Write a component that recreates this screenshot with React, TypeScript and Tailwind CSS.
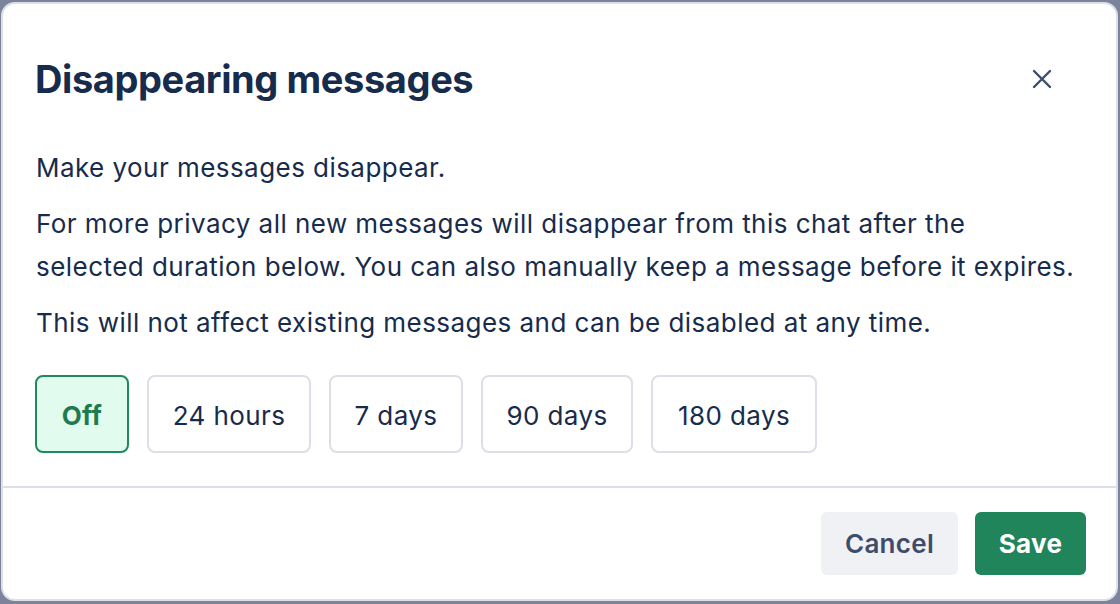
import React, { useState } from "react";

const options = [
  { label: "Off", w: "w-[94px]" },
  { label: "24 hours", w: "w-[164px]" },
  { label: "7 days", w: "w-[134px]" },
  { label: "90 days", w: "w-[152px]" },
  { label: "180 days", w: "w-[166px]" },
];

export default function App() {
  const [picked, setPicked] = useState("Off");

  return (
    <div className="h-[604px] w-full overflow-hidden bg-[#7b849a] pt-[2px] pl-[1px]" style={{ fontFamily: "Inter, 'Noto Sans', sans-serif" }}>
      <div className="flex h-[599px] w-[1117px] flex-col rounded-[14px] border-2 border-[#dedfe6] bg-white text-[#172b4d]">
        <div className="flex items-center justify-between pl-[32px] pr-[64px] pt-[53px]">
          <h1 className="text-[38px] font-bold leading-[44px] tracking-[-0.4px]">Disappearing messages</h1>
          <button className="text-[#3d4c6a]">
            <svg width="20" height="20" viewBox="0 0 20 20" fill="none" stroke="currentColor" strokeWidth="2.4" strokeLinecap="round">
              <path d="M2 2 L18 18 M18 2 L2 18" />
            </svg>
          </button>
        </div>

        <div className="flex flex-col gap-[13px] pl-[33px] pr-[20px] pt-[45px] text-[26px] leading-[43px] tracking-[0.45px]">
          <p>Make your messages disappear.</p>
          <p>
            For more privacy all new messages will disappear from this chat after the
            <br />
            selected duration below. You can also manually keep a message before it expires.
          </p>
          <p>This will not affect existing messages and can be disabled at any time.</p>
        </div>

        <div className="flex gap-[18px] px-[32px] pt-[31px]">
          {options.map((o) => (
            <button
              key={o.label}
              onClick={() => setPicked(o.label)}
              className={
                o.label === picked
                  ? `h-[78px] ${o.w} rounded-[8px] border-2 border-[#1f8a5c] bg-[#e1fcef] pt-[2px] text-[26px] font-bold tracking-[0.3px] text-[#1e7a4f]`
                  : `h-[78px] ${o.w} rounded-[8px] border-2 border-[#dedfe6] bg-white pt-[2px] text-[26px] tracking-[0.4px] text-[#172b4d]`
              }
            >
              {o.label}
            </button>
          ))}
        </div>

        <div className="mt-[33px] h-[2px] bg-[#dedfe6]" />

        <div className="flex justify-end gap-[17px] px-[30px] pt-[24px]">
          <button className="h-[63px] w-[137px] rounded-[6px] bg-[#f0f1f4] text-[26px] font-semibold tracking-[0.3px] text-[#3d4c6a]">Cancel</button>
          <button className="h-[63px] w-[111px] rounded-[6px] bg-[#20855a] text-[26px] font-bold tracking-[0.3px] text-white">Save</button>
        </div>
      </div>
    </div>
  );
}
